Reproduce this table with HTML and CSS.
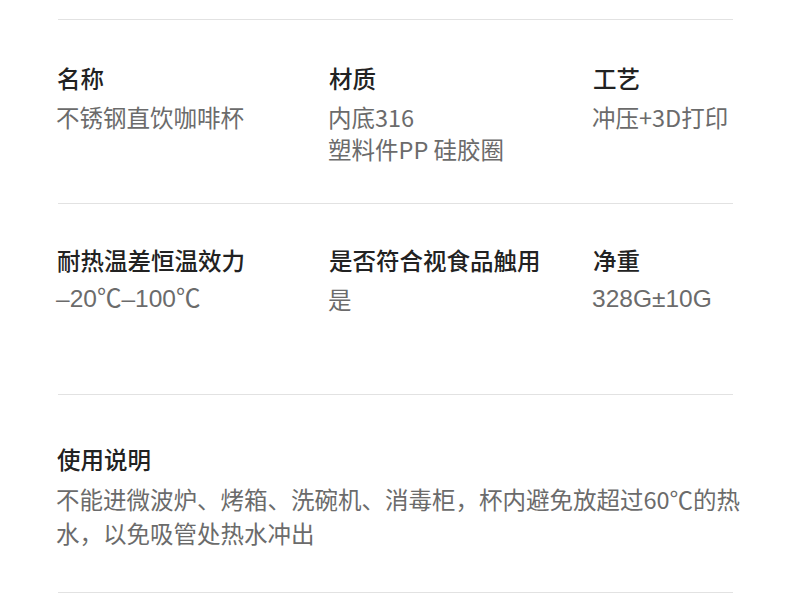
FILE: index.html
```html
<!DOCTYPE html>
<html lang="zh-CN">
<head>
<meta charset="utf-8">
<link rel="stylesheet" href="styles.css">
</head>
<body>
<div class="page">
  <div class="divider"></div>
  <section class="sec sec1">
    <div class="grid">
      <div class="item">
        <div class="title">名称</div>
        <div class="value">不锈钢直饮咖啡杯</div>
      </div>
      <div class="item">
        <div class="title">材质</div>
        <div class="value">内底316<br>塑料件PP 硅胶圈</div>
      </div>
      <div class="item">
        <div class="title">工艺</div>
        <div class="value">冲压+3D打印</div>
      </div>
    </div>
  </section>
  <div class="divider"></div>
  <section class="sec sec2">
    <div class="grid">
      <div class="item">
        <div class="title">耐热温差恒温效力</div>
        <div class="value latin">–20℃–100℃</div>
      </div>
      <div class="item">
        <div class="title">是否符合视食品触用</div>
        <div class="value">是</div>
      </div>
      <div class="item">
        <div class="title">净重</div>
        <div class="value latin">328G±10G</div>
      </div>
    </div>
  </section>
  <div class="divider"></div>
  <section class="sec sec3">
    <div class="title">使用说明</div>
    <div class="value para">不能进微波炉、烤箱、洗碗机、消毒柜，杯内避免放超过60℃的热水，以免吸管处热水冲出</div>
  </section>
  <div class="divider"></div>
</div>
</body>
</html>
```
FILE: styles.css
```css
html, body {
  margin: 0;
  padding: 0;
  background: #ffffff;
}
body {
  font-family: "Noto Sans CJK SC", "Noto Sans", sans-serif;
  width: 790px;
  height: 607px;
  overflow: hidden;
}
.page {
  padding: 19px 57px 0 56px;
}
.divider {
  height: 1px;
  background: #e2e2e2;
  margin-left: 2px;
}
.grid {
  display: grid;
  grid-template-columns: 272px 264px 1fr;
}
.title {
  font-size: 23.5px;
  line-height: 32px;
  font-weight: 500;
  color: #222222;
  margin-left: 1px;
}
.value {
  font-size: 23.5px;
  line-height: 32px;
  color: #6b6b6b;
  margin-top: 7px;
}
.latin {
  font-family: "Liberation Sans", "Noto Sans CJK SC", sans-serif;
  font-size: 24.5px;
}
.sec1 {
  padding: 42px 0 38px;
}
.sec2 {
  padding: 40px 0 79px;
}
.sec3 {
  padding: 48px 0 42px;
}
.para {
  width: 690px;
  line-height: 34px;
}
```
